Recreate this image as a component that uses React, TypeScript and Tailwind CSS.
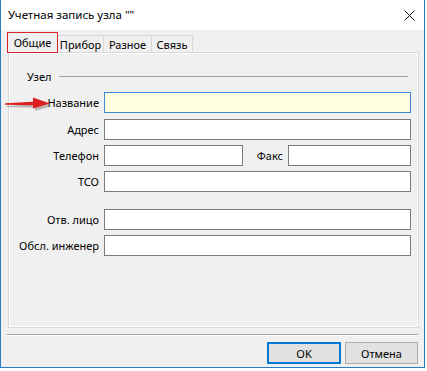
import React from "react";

const font = { fontFamily: '"Noto Sans", "Open Sans", sans-serif' };

const Field = ({ value = "", active = false }: { value?: string; active?: boolean }) => (
  <div
    className={
      "h-full flex-1 border " +
      (active ? "border-[#3d8ad3] bg-[#ffffe1]" : "border-[#7a7a7a] bg-white")
    }
  >
    {value}
  </div>
);

const Row = ({ label, className = "", active = false }: { label: string; className?: string; active?: boolean }) => (
  <div className={"flex items-center h-[21px] pr-[7px] " + className}>
    <div className="w-[91px] text-right pr-[1px]">{label}</div>
    <div className="ml-[4px] flex-1 h-full flex">
      <Field active={active} />
    </div>
  </div>
);

const App = () => {
  return (
    <div className="w-[427px] h-[371px] bg-white relative text-[11px] text-black leading-none" style={font}>
      <div className="w-[425px] h-[368px] border-x border-b border-[#2a7bc6] bg-[#f0f0f0] flex flex-col">
        {/* заголовок окна */}
        <div className="h-[30px] bg-white flex items-center justify-between pl-[7px] pr-[9px] text-[11.5px]">
          <span>Учетная запись узла ""</span>
          <svg width="11" height="11" viewBox="0 0 11 11">
            <path d="M0.5 0.5 L10.5 10.5 M10.5 0.5 L0.5 10.5" stroke="#111" strokeWidth="1" />
          </svg>
        </div>

        <div className="pl-[7px] pr-[6px] flex flex-col">
          {/* вкладки */}
          <div className="flex items-end h-[20px] mt-[2px] relative z-10">
            <div className="w-[51px] h-[21px] -mb-[1px] -ml-[1px] border-[1.5px] border-[#d8242b] bg-[#f0f0f0] flex items-center justify-center">
              Общие
            </div>
            <div className="w-[46px] h-[17px] border-t border-r border-[#d9d9d9] flex items-center justify-center">
              Прибор
            </div>
            <div className="w-[48px] h-[17px] border-t border-r border-[#d9d9d9] flex items-center justify-center">
              Разное
            </div>
            <div className="w-[41px] h-[17px] border-t border-r border-[#d9d9d9] flex items-center justify-center">
              Связь
            </div>
          </div>

          {/* панель */}
          <div className="w-[411px] h-[276px] border border-[#d9d9d9] shadow-[inset_0_0_0_1px_#ffffff] flex flex-col">
            <div className="flex items-center h-[16px] mt-[15px] pl-[18px] pr-[10px]">
              <span>Узел</span>
              <div className="flex-1 ml-[8px] h-px bg-[#a0a0a0]" />
            </div>

            <Row label="Название" className="mt-[8px]" active />
            <Row label="Адрес" className="mt-[6px]" />
            <div className="flex items-center h-[21px] pr-[7px] mt-[5px]">
              <div className="w-[91px] text-right pr-[1px]">Телефон</div>
              <div className="ml-[4px] w-[139px] h-full flex">
                <Field />
              </div>
              <div className="w-[41px] text-right pr-[1px]">Факс</div>
              <div className="ml-[4px] flex-1 h-full flex">
                <Field />
              </div>
            </div>
            <Row label="ТСО" className="mt-[5px]" />
            <Row label="Отв. лицо" className="mt-[17px]" />
            <Row label="Обсл. инженер" className="mt-[5px]" />
          </div>

          {/* разделитель */}
          <div className="mt-[6px] h-px bg-[#a0a0a0] w-[411px] -ml-[1px]" />
          <div className="h-px bg-white w-[411px] -ml-[1px]" />

          {/* кнопки */}
          <div className="flex justify-end gap-[4px] mt-[6px] w-[410px]">
            <button className="w-[74px] h-[22px] border-2 border-[#0078d7] bg-[#e1e1e1] flex items-center justify-center">
              OK
            </button>
            <button className="w-[73px] h-[22px] border border-[#adadad] bg-[#e1e1e1] flex items-center justify-center">
              Отмена
            </button>
          </div>
        </div>
      </div>

      {/* красная стрелка */}
      <svg className="absolute left-[4px] top-[96px]" width="50" height="16" viewBox="0 0 50 16">
        <polygon points="2,8.5 30,6.8 30,2.5 47,8.5 30,13.5 30,10.2 2,9.5" fill="#7a6a6a" opacity="0.45" transform="translate(1,1.5)" />
        <polygon points="1,7.3 29,5.8 29,1.5 46,7.5 29,12.5 29,9.2 1,8.7" fill="#dc1f1f" />
      </svg>
    </div>
  );
};

export default App;
